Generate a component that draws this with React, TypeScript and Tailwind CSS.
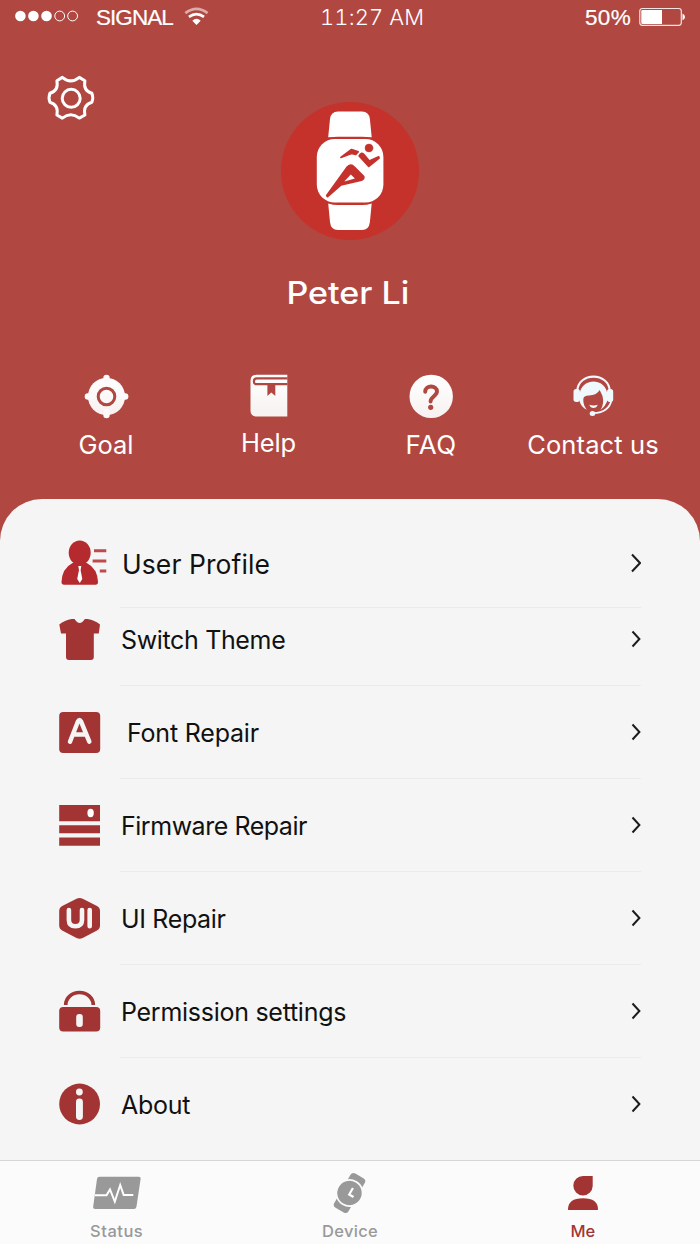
import type { ReactNode } from "react";

type ArtProps = { box: string; w: number; h: number; className?: string; children: ReactNode };

function Art({ box, w, h, className, children }: ArtProps) {
  return (
    <svg viewBox={box} width={w} height={h} className={className ?? "block shrink-0"} fill="none">
      {children}
    </svg>
  );
}

function StatusBar() {
  return (
    <div className="flex h-[34px] items-center text-white">
      <Art box="0 0 96 34" w={96} h={34}>
        <g fill="#fff">
          <circle cx="20.400" cy="16" r="5.300" />
          <circle cx="33.400" cy="16" r="5.300" />
          <circle cx="46.500" cy="16" r="5.300" />
        </g>
        <g stroke="#fff" strokeWidth="1">
          <circle cx="59.700" cy="16" r="4.900" />
          <circle cx="72.600" cy="16" r="4.900" />
        </g>
      </Art>
      <span className="w-[88px] pt-px text-[22.5px] tracking-[-0.95px] [-webkit-text-stroke:0.2px_#fff]">SIGNAL</span>
      <Art box="184 7 26 20" w={26} h={20}>
        <path d="M185.300 13.100Q196.500 4.600 207.600 13.100" stroke="#fff" strokeOpacity=".55" strokeWidth="2.600" />
        <path d="M188.900 16.900Q196.500 11.200 204 16.900" stroke="#fff" strokeWidth="2.600" />
        <path d="M192.300 20.700Q196.500 17 200.700 20.700L196.500 25Z" fill="#fff" />
      </Art>
      <span className="ml-[110px] w-[265px] pt-px font-['Inter'] text-[22px] font-light tracking-[0.1px] tabular-nums">11:27 AM</span>
      <span className="w-[54px] pt-px text-[22.5px] tracking-[0.3px] [-webkit-text-stroke:0.2px_#fff]">50%</span>
      <Art box="639 6 48 20" w={48} h={20}>
        <rect x="639.800" y="7.500" width="41.500" height="16.800" rx="2.500" stroke="#fff" strokeOpacity=".85" strokeWidth="1.200" />
        <path d="M642.500 9H662V23H642.500Q641.300 23 641.300 21.800V10.200Q641.300 9 642.500 9Z" fill="#fff" />
        <path d="M682.500 12.500Q685 13.500 685 16T682.500 19.300Z" fill="#fff" />
      </Art>
    </div>
  );
}

function Gear() {
  return (
    <Art box="46 74 50 48" w={50} h={48}>
      <path
        d="M62.300 77.400Q70.800 84.400 79.300 77.400L84.900 80.700C83.600 87.500 85.600 91.500 91.900 93.300Q93.600 97.800 91.900 102.300C85.800 104.100 83.500 108.300 84.900 115L79.300 118.100Q70.800 111.400 62.300 118.100L56.900 115C58.200 108.300 55.900 104.100 49.900 102.300Q48.200 97.800 49.900 93.300C55.900 91.500 58.200 87.500 56.900 80.700Z"
        stroke="#fff"
        strokeWidth="3"
        strokeLinejoin="round"
      />
      <circle cx="71.200" cy="98.300" r="9" stroke="#fff" strokeWidth="3" />
    </Art>
  );
}

function Avatar() {
  return (
    <Art box="280 101 140 140" w={140} h={140}>
      <circle cx="350" cy="171" r="69" fill="#c5322c" />
      <path d="M328.200 137.300L330 119Q330.800 111.500 338 111.500H362Q369 111.500 369.900 119L371.700 137.300Q367 136.800 362 136.800H338Q333 136.800 328.200 137.300Z" fill="#fff" />
      <path d="M328.200 203.500Q333 205 338 205H362Q367 205 371.700 203.500L369.900 222Q369 230 362 230H338Q330.800 230 330 222Z" fill="#fff" />
      <rect x="316.800" y="139" width="66.600" height="63.500" rx="18" fill="#fff" />
      <g fill="#c5322c" stroke="#c5322c" strokeLinejoin="round" strokeLinecap="round">
        <circle cx="369" cy="148" r="4" strokeWidth=".4" />
        <path d="M340.900 157.500L351.500 149.500L358.300 151.700L355.800 154.500L351.500 153.500Z" strokeWidth="1.600" />
        <path d="M359.200 156Q361.500 151.500 364.300 155L369.300 161L378.700 156.900L379 158L368.800 166.400Z" strokeWidth="1.800" />
        <path d="M326.800 195.500L347 167.500Q350.800 163.300 354 167L363.500 176.500Q364.500 178.800 361.500 180L341 184.700L327.500 196.500Z" strokeWidth="1.900" />
      </g>
      <path d="M344.300 181.500L350.800 174.500L354.900 178.600Z" fill="#fff" />
    </Art>
  );
}

function GoalIcon() {
  return (
    <Art box="83.500 374 46 46" w={46} h={46}>
      <circle cx="107" cy="396.500" r="18.600" fill="url(#soft)" />
      <g fill="#fcfafa">
        <rect x="103.800" y="374.800" width="6.400" height="9" rx="3.200" />
        <rect x="103.800" y="409.200" width="6.400" height="9" rx="3.200" />
        <rect x="85.200" y="393.300" width="9" height="6.400" rx="3.200" />
        <rect x="119.900" y="393.300" width="9" height="6.400" rx="3.200" />
      </g>
      <circle cx="107" cy="396.500" r="8.300" stroke="#b14741" strokeWidth="3" />
      <defs>
        <linearGradient id="soft" x1="0" y1="0" x2="0" y2="1">
          <stop stopColor="#fff" />
          <stop offset="1" stopColor="#f7f1f1" />
        </linearGradient>
      </defs>
    </Art>
  );
}

function HelpIcon() {
  return (
    <Art box="248.500 374 42 46" w={42} h={46}>
      <path d="M257 374.800H287.800V416.500H257Q251 416.500 251 410.500V380.800Q251 374.800 257 374.800Z" fill="url(#soft)" />
      <path d="M288 378.300H257.300Q254.400 378.500 254.400 381.400T257.300 384.200H288" stroke="#b14741" strokeWidth="2.200" />
      <path d="M267.900 384.500H275.800V396L271.800 392.600L267.900 396Z" fill="#b14741" />
    </Art>
  );
}

function FaqIcon() {
  return (
    <Art box="408 374 46 46" w={46} h={46}>
      <circle cx="431.200" cy="396.400" r="21.700" fill="url(#soft)" />
      <path d="M425.200 391.800C425.200 384.700 437 384.800 437 391.600C437 396 430.600 396.500 430.600 401.500" stroke="#b14741" strokeWidth="3.900" strokeLinecap="round" />
      <circle cx="430.700" cy="407.300" r="2.600" fill="#b14741" />
    </Art>
  );
}

function ContactIcon() {
  return (
    <Art box="572 374 42 46" w={42} h={46}>
      <path d="M579.500 401V396C579.500 376.500 607.500 376.500 607.500 396V400Q605.500 406.500 600.500 409.800Q604.500 404 602.500 396L599.700 390Q597 395 589 395.500Q583.500 395.700 583.300 399Q583 405 586.800 409.800Q581 407 579.500 401Z" fill="#eef8fd" />
      <path d="M577.300 391C577.800 371.800 609.200 371.800 609.700 391" stroke="#eef8fd" strokeWidth="2.100" />
      <path d="M580 388C584 377.500 603 377.500 607 388" stroke="#b14741" strokeWidth="1.500" />
      <g fill="#eef8fd">
        <rect x="573.500" y="389" width="6.500" height="13" rx="2.700" />
        <rect x="607" y="389" width="6.200" height="13" rx="2.700" />
      </g>
      <path d="M589.300 404.800Q593.500 406.300 597.700 404.800Q596.500 408 593.500 408Q590.500 408 589.300 404.800Z" fill="#eef8fd" />
      <path d="M611.500 400Q609 412.500 593.500 413.200" stroke="#eef8fd" strokeWidth="1.800" />
      <ellipse cx="592.500" cy="413.500" rx="2.800" ry="2.500" fill="#eef8fd" />
    </Art>
  );
}

function UserIcon() {
  return (
    <Art box="59 538 50 50" w={50} h={50}>
      <g fill="#b52a2e">
        <ellipse cx="79.700" cy="552.800" rx="11" ry="12.300" />
        <path d="M72.500 563Q62 568.500 61.500 582Q61.500 584.700 64 584.700H95.500Q98 584.700 98 582Q97.500 568.500 86.800 563Z" />
      </g>
      <path d="M78.300 566H81.300L80.600 570L82.300 579L79.800 583L77.200 579L79 570Z" fill="#fff" />
      <path d="M94 550.700H106.300M92.600 561H106.300M99.800 571H106.300" stroke="#bd4a4e" strokeWidth="2.900" />
    </Art>
  );
}

function ShirtIcon() {
  return (
    <Art box="59 617 42 46" w={42} h={46}>
      <path d="M59.300 624.500Q64.500 620.300 71.800 619H74.500Q79.700 627 84.800 619H87.500Q94.800 620.300 100 624.500L98.800 633.500H93.800V657Q93.800 660 90.800 660H69Q66 660 66 657V633.500H61Z" fill="#a23433" />
    </Art>
  );
}

function FontIcon() {
  return (
    <Art box="59 711 42 42" w={42} h={42}>
      <rect x="59.200" y="712" width="41" height="41" rx="4" fill="#a23433" />
      <path d="M70 741.700L78 721.300Q79.500 718.500 81 721.300L89.300 741.700M73 734.500H86.500" stroke="#f5f5f5" strokeWidth="4.500" strokeLinecap="round" strokeLinejoin="round" />
    </Art>
  );
}

function FirmwareIcon() {
  return (
    <Art box="59 804 42 42" w={42} h={42}>
      <path d="M59.200 805H100V821.200H59.200ZM59.200 825.300H100V833.300H59.200ZM59.200 837.500H100V845.700H59.200Z" fill="#a23433" />
      <ellipse cx="90.600" cy="813" rx="3.200" ry="4.200" fill="#fff" />
    </Art>
  );
}

function UiIcon() {
  return (
    <Art box="59 897 42 42" w={42} h={42}>
      <path d="M76.500 898.800Q79.600 897 82.700 898.800L97 906Q100 907.600 100 911V925.500Q100 928.900 97 930.500L82.700 937.900Q79.600 939.500 76.500 937.900L62.200 930.500Q59.200 928.900 59.200 925.500V911Q59.200 907.600 62.200 906Z" fill="#a23433" />
      <path d="M68.900 910V920Q68.900 926.300 75.400 926.300T82 920V910M89.700 910V926.300" stroke="#f5f5f5" strokeWidth="4.600" strokeLinecap="round" />
    </Art>
  );
}

function LockIcon() {
  return (
    <Art box="59 990 42 42" w={42} h={42}>
      <path d="M65.700 1005A13.800 12.500 0 0 1 93.300 1005" stroke="#a23433" strokeWidth="3.700" />
      <rect x="59.200" y="1007" width="41" height="24.600" rx="4" fill="#a23433" />
      <rect x="76.200" y="1014" width="6.600" height="13" rx="3" fill="#f5f5f5" />
    </Art>
  );
}

function InfoIcon() {
  return (
    <Art box="59 1083 42 42" w={42} h={42}>
      <circle cx="79.600" cy="1104" r="20.400" fill="#a23433" />
      <circle cx="79.400" cy="1092" r="3.400" fill="#f5f5f5" />
      <rect x="76" y="1098.500" width="6.900" height="21.500" rx="3.400" fill="#f5f5f5" />
    </Art>
  );
}

type Item = { label: string; icon: ReactNode; row: string; art: string; text: string; big?: boolean };

const line = "border-b border-[#ebebeb]";

const items: Item[] = [
  { label: "User Profile", icon: <UserIcon />, row: "h-[89px]", art: "pb-[2px]", text: `${line} pl-[2px] text-[26.5px] tracking-[0.08px]`, big: true },
  { label: "Switch Theme", icon: <ShirtIcon />, row: "h-[78px]", art: "pb-[14px]", text: `${line} pb-[14px] pl-px text-[25px] tracking-[-0.35px]` },
  { label: "Font Repair", icon: <FontIcon />, row: "h-[93px]", art: "pb-[2px]", text: `${line} pl-[7px] text-[25px] tracking-[-0.2px]` },
  { label: "Firmware Repair", icon: <FirmwareIcon />, row: "h-[93px]", art: "pb-[2px]", text: `${line} pl-px text-[25px] tracking-[-0.47px]` },
  { label: "UI Repair", icon: <UiIcon />, row: "h-[93px]", art: "pb-[2px]", text: `${line} pl-px text-[25px] tracking-[-0.35px]` },
  { label: "Permission settings", icon: <LockIcon />, row: "h-[93px]", art: "pb-[2px]", text: `${line} pl-px text-[25px] tracking-[-0.27px]` },
  { label: "About", icon: <InfoIcon />, row: "h-[93px]", art: "pb-[2px]", text: "pl-px text-[25px] tracking-[-0.3px]" },
];

function MenuRow({ item }: { item: Item }) {
  return (
    <div className={`flex pl-[59px] pr-[59px] ${item.row}`}>
      <div className={`flex w-[61px] shrink-0 items-center ${item.art}`}>{item.icon}</div>
      <div className={`flex flex-1 items-center justify-between ${item.text}`}>
        <span className="pt-[3px] whitespace-nowrap">{item.label}</span>
        <Art box="0 0 12 20" w={12} h={20} className="mb-px block shrink-0">
          <path d={item.big ? "M3 1.500L11 10L3 18.500" : "M3.500 2.500L10.400 10L3.500 17.500"} stroke="#1c1c1c" strokeWidth="2" />
        </Art>
      </div>
    </div>
  );
}

export default function App() {
  return (
    <div className="flex h-[1244px] w-[700px] flex-col overflow-hidden bg-[#b14741] font-['Liberation_Sans',sans-serif]">
      <StatusBar />
      <header className="flex h-[465px] shrink-0 flex-col font-['Inter',sans-serif] text-white">
        <div className="flex h-[207px] justify-between pl-[46px] pr-[46px]">
          <div className="w-[50px] pt-[40px]"><Gear /></div>
          <div className="pt-[67px]"><Avatar /></div>
          <div className="w-[50px]" />
        </div>
        <h1 className="mt-[30px] h-[44px] pr-[4px] text-center text-[31.5px] leading-[44px] font-medium">
          <span className="inline-block scale-x-[1.08]">Peter Li</span>
        </h1>
        <div className="mt-[59px] flex pl-[25px] text-[25.5px] leading-[32px]">
          <div className="flex w-[162px] flex-col items-center"><GoalIcon /><span className="mt-[9px]">Goal</span></div>
          <div className="flex w-[163px] flex-col items-center"><HelpIcon /><span className="mt-[7px] tracking-[-0.2px]">Help</span></div>
          <div className="flex w-[162px] flex-col items-center"><FaqIcon /><span className="mt-[9px] text-[26px] tracking-[0.4px]">FAQ</span></div>
          <div className="flex w-[162px] flex-col items-center"><ContactIcon /><span className="mt-[9px] tracking-[0.12px]">Contact us</span></div>
        </div>
      </header>
      <main className="flex h-[661px] shrink-0 flex-col rounded-t-[42px] bg-[#f5f5f5] pt-[20px] font-['Inter',sans-serif] text-[#111]">
        {items.map((item) => <MenuRow key={item.label} item={item} />)}
      </main>
      <nav className="grid h-[84px] shrink-0 grid-cols-3 border-t border-[#d6d6d6] bg-[#fbfbfb] font-['Inter',sans-serif] text-[16.5px] font-medium text-[#999]">
        <div className="flex flex-col items-center pt-[11px]">
          <Art box="92 1172 50 42" w={50} h={42}>
            <path d="M99.500 1176.700H138.500Q141 1176.700 140.600 1179L136.500 1206.500Q136.200 1209 133.700 1209H95.300Q92.800 1209 93.200 1206.500L97 1179Q97.300 1176.700 99.500 1176.700Z" fill="#999" />
            <path d="M95 1195.300H106.500L110 1189.500L114.800 1201.500L120.200 1185L123.700 1195H133.300" stroke="#fff" strokeWidth="2" />
          </Art>
          <span className="mt-[6px] leading-[22px] tracking-[0.5px]">Status</span>
        </div>
        <div className="flex flex-col items-center pt-[11px]">
          <Art box="329 1172 42 42" w={42} h={42}>
            <g transform="rotate(30 349.500 1193)">
              <rect x="341.300" y="1173.300" width="16.400" height="39.400" rx="3.500" fill="#999" />
              <circle cx="349.500" cy="1193" r="14" fill="#fbfbfb" />
              <circle cx="349.500" cy="1193" r="12.200" fill="#999" />
              <path d="M350 1187V1194.500H355" stroke="#fff" strokeWidth="2.200" />
            </g>
          </Art>
          <span className="mt-[6px] leading-[22px] tracking-[0.3px]">Device</span>
        </div>
        <div className="flex flex-col items-center pt-[11px] text-[#a23433]">
          <Art box="562 1172 42 42" w={42} h={42}>
            <path d="M583 1176H592.700V1186A9.700 9.700 0 1 1 583 1176Z" fill="#a23433" />
            <path d="M568 1209.500Q568 1198.200 583 1198.200T598 1209.500Q598 1210 597 1210H569Q568 1210 568 1209.500Z" fill="#a23433" />
          </Art>
          <span className="mt-[6px] pr-px leading-[22px]">Me</span>
        </div>
      </nav>
    </div>
  );
}
